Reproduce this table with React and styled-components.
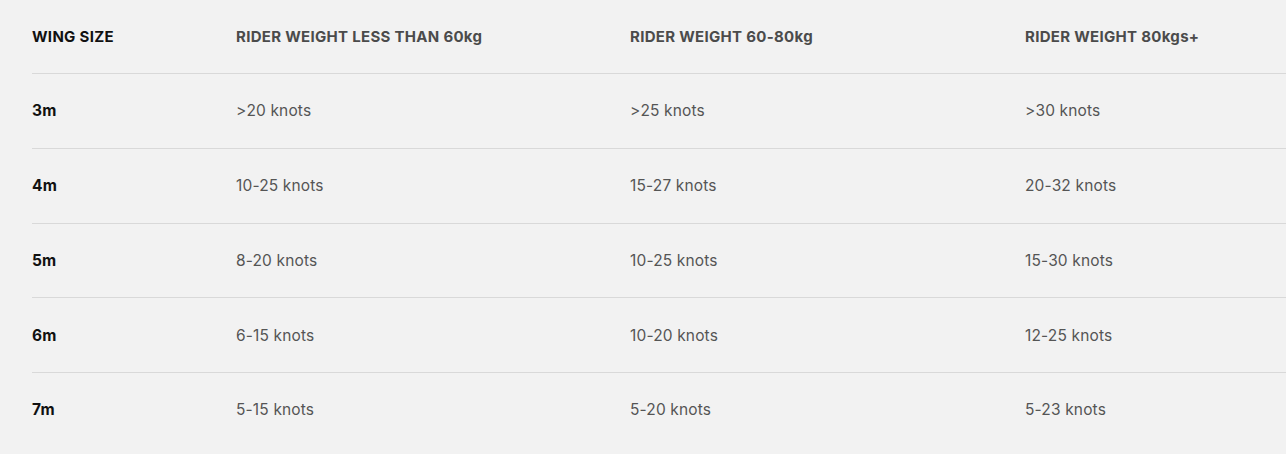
import React from 'react'
import styled, { createGlobalStyle } from 'styled-components'

const GlobalStyle = createGlobalStyle`
  html, body {
    margin: 0;
    padding: 0;
    background: #f2f2f2;
  }
  body {
    font-family: 'Inter', 'Noto Sans', sans-serif;
    overflow: hidden;
  }
`

const headers = [
  'WING SIZE',
  'RIDER WEIGHT LESS THAN 60kg',
  'RIDER WEIGHT 60-80kg',
  'RIDER WEIGHT 80kgs+',
]

const rows = [
  ['3m', '>20 knots', '>25 knots', '>30 knots'],
  ['4m', '10-25 knots', '15-27 knots', '20-32 knots'],
  ['5m', '8-20 knots', '10-25 knots', '15-30 knots'],
  ['6m', '6-15 knots', '10-20 knots', '12-25 knots'],
  ['7m', '5-15 knots', '5-20 knots', '5-23 knots'],
]

export default function App() {
  return (
    <>
      <GlobalStyle />
      <Page>
        <Table>
          <HeadRow>
            {headers.map((h, i) => (
              <HeadCell key={h} $first={i === 0}>{h}</HeadCell>
            ))}
          </HeadRow>
          {rows.map((r, ri) => (
            <Row key={r[0]} $last={ri === rows.length - 1}>
              {r.map((c, i) => (
                <Cell key={i} $first={i === 0}>{c}</Cell>
              ))}
            </Row>
          ))}
        </Table>
      </Page>
    </>
  )
}

const Page = styled.div`
  padding-left: 32px;
  width: 100%;
  height: 454px;
  box-sizing: border-box;
`

const Table = styled.div`
  display: flex;
  flex-direction: column;
  width: 100%;
`

const HeadRow = styled.div`
  display: grid;
  grid-template-columns: 204px 394px 395px 1fr;
  align-items: center;
  height: 72px;
  padding-bottom: 1px;
  border-bottom: 1px solid #d9d9d9;
`

const Row = styled.div`
  display: grid;
  grid-template-columns: 204px 394px 395px 1fr;
  align-items: center;
  height: 73.75px;
  border-bottom: ${p => (p.$last ? 'none' : '1px solid #d9d9d9')};
`

const HeadCell = styled.div`
  font-size: 15px;
  font-weight: 700;
  letter-spacing: 0.3px;
  color: ${p => (p.$first ? '#111111' : '#4b4b4b')};
  white-space: nowrap;
`

const Cell = styled.div`
  font-size: 15.5px;
  font-weight: ${p => (p.$first ? 700 : 400)};
  letter-spacing: 0.15px;
  color: ${p => (p.$first ? '#111111' : '#555555')};
  white-space: nowrap;
`
